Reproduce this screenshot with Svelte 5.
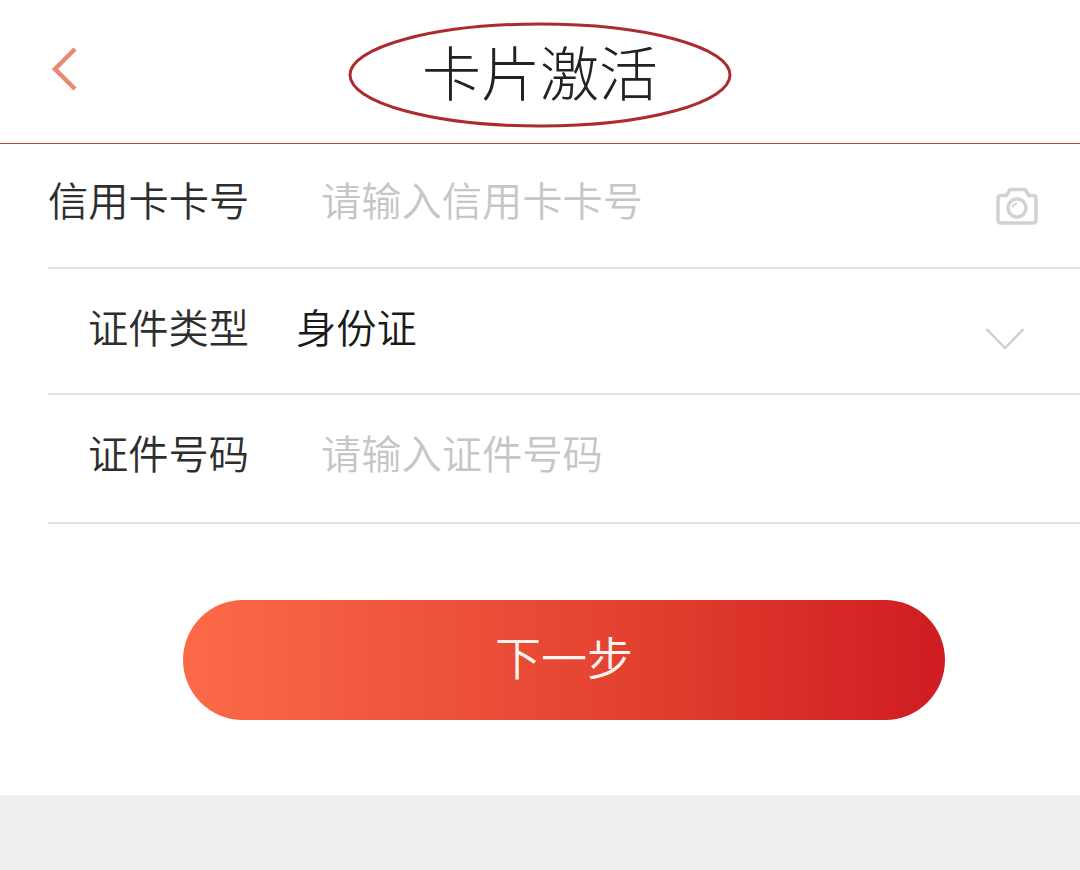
<script>
  const rows = [
    { label: '信用卡卡号', placeholder: '请输入信用卡卡号', kind: 'camera', height: 125, shift: 12 },
    { label: '证件类型', value: '身份证', kind: 'chevron', height: 126, shift: 10 },
    { label: '证件号码', placeholder: '请输入证件号码', height: 129, shift: 13 }
  ];
</script>

<div class="page">
  <header class="header">
    <svg class="back" viewBox="0 0 30 46" aria-hidden="true">
      <path d="M25 3 L5 23 L25 43" />
    </svg>
    <h1 class="title">卡片激活</h1>
    <svg class="circle" viewBox="0 0 384 106" aria-hidden="true">
      <ellipse cx="192" cy="53" rx="190" ry="51" />
    </svg>
  </header>

  <main class="form">
    {#each rows as row}
      <div class="row" style="height: {row.height}px; padding-bottom: {row.shift}px">
        <span class="label">{row.label}</span>
        {#if row.value}
          <span class="value">{row.value}</span>
        {:else}
          <span class="placeholder">{row.placeholder}</span>
        {/if}
        {#if row.kind === 'camera'}
          <svg class="camera" viewBox="0 0 44 38" aria-hidden="true">
            <path d="M3 11.5 Q3 8.5 6 8.5 H11.5 L15 2.5 H30 L34 8.5 H38 Q41 8.5 41 11.5 V33 Q41 36 38 36 H6 Q3 36 3 33 Z" />
            <circle cx="22" cy="21" r="9" />
            <path class="glint" d="M17.5 20.5 A5 5 0 0 1 22 16.5" />
          </svg>
        {:else if row.kind === 'chevron'}
          <svg class="chevron" viewBox="0 0 40 24" aria-hidden="true">
            <path d="M1.5 2 L20 21 L38.5 2" />
          </svg>
        {/if}
      </div>
    {/each}
  </main>

  <div class="action">
    <button class="next" type="button">下一步</button>
  </div>

  <div class="footer"></div>
</div>

<style>
  :global(body) {
    margin: 0;
    background: #fff;
  }

  .page {
    width: 1080px;
    height: 870px;
    display: flex;
    flex-direction: column;
    overflow: hidden;
    font-family: "Noto Sans CJK SC", "Liberation Sans", sans-serif;
  }

  .header {
    position: relative;
    height: 140px;
    flex: none;
    border-bottom: 1px solid #b5473c;
    display: flex;
    align-items: center;
    justify-content: center;
    padding-bottom: 3px;
    box-sizing: content-box;
  }

  .title {
    margin: 0;
    font-size: 59px;
    font-weight: 320;
    line-height: 1;
    color: #222;
  }

  .back {
    position: absolute;
    left: 50px;
    top: 46px;
    width: 30px;
    height: 46px;
  }

  .back path {
    fill: none;
    stroke: #e98a70;
    stroke-width: 4.5;
  }

  .circle {
    position: absolute;
    left: 348px;
    top: 22px;
    width: 384px;
    height: 106px;
  }

  .circle ellipse {
    fill: none;
    stroke: #ab2b31;
    stroke-width: 3;
  }

  .form {
    padding-left: 48px;
    flex: none;
  }

  .row {
    position: relative;
    border-bottom: 2px solid #e2e2e2;
    display: flex;
    align-items: center;
    box-sizing: border-box;
    font-size: 40.25px;
    line-height: 1;
    font-weight: 330;
  }

  .label {
    flex: none;
    width: 201px;
    margin-right: 47px;
    text-align: right;
    color: #2e2e2e;
    white-space: nowrap;
  }

  .placeholder {
    margin-left: 25px;
    color: #c6c6c6;
  }

  .value {
    color: #1a1a1a;
  }

  .camera {
    position: absolute;
    left: 947px;
    top: 43px;
    width: 44px;
    height: 38px;
  }

  .camera path,
  .camera circle {
    fill: none;
    stroke: #d2d2d2;
    stroke-width: 3.5;
  }

  .camera .glint {
    stroke-width: 2;
  }

  .chevron {
    position: absolute;
    left: 937px;
    top: 58px;
    width: 40px;
    height: 24px;
  }

  .chevron path {
    fill: none;
    stroke: #cfcfcf;
    stroke-width: 2.5;
  }

  .action {
    flex: 1;
    padding: 76px 0 0 183px;
  }

  .next {
    display: block;
    width: 762px;
    height: 120px;
    padding: 0 0 10px;
    border: none;
    border-radius: 60px;
    background: linear-gradient(90deg, #fb6a49 0%, #e2402f 60%, #cf1c22 100%);
    color: #fdf3ee;
    font-family: inherit;
    font-size: 46px;
    font-weight: 330;
  }

  .footer {
    height: 75px;
    flex: none;
    background: #efefef;
  }
</style>
